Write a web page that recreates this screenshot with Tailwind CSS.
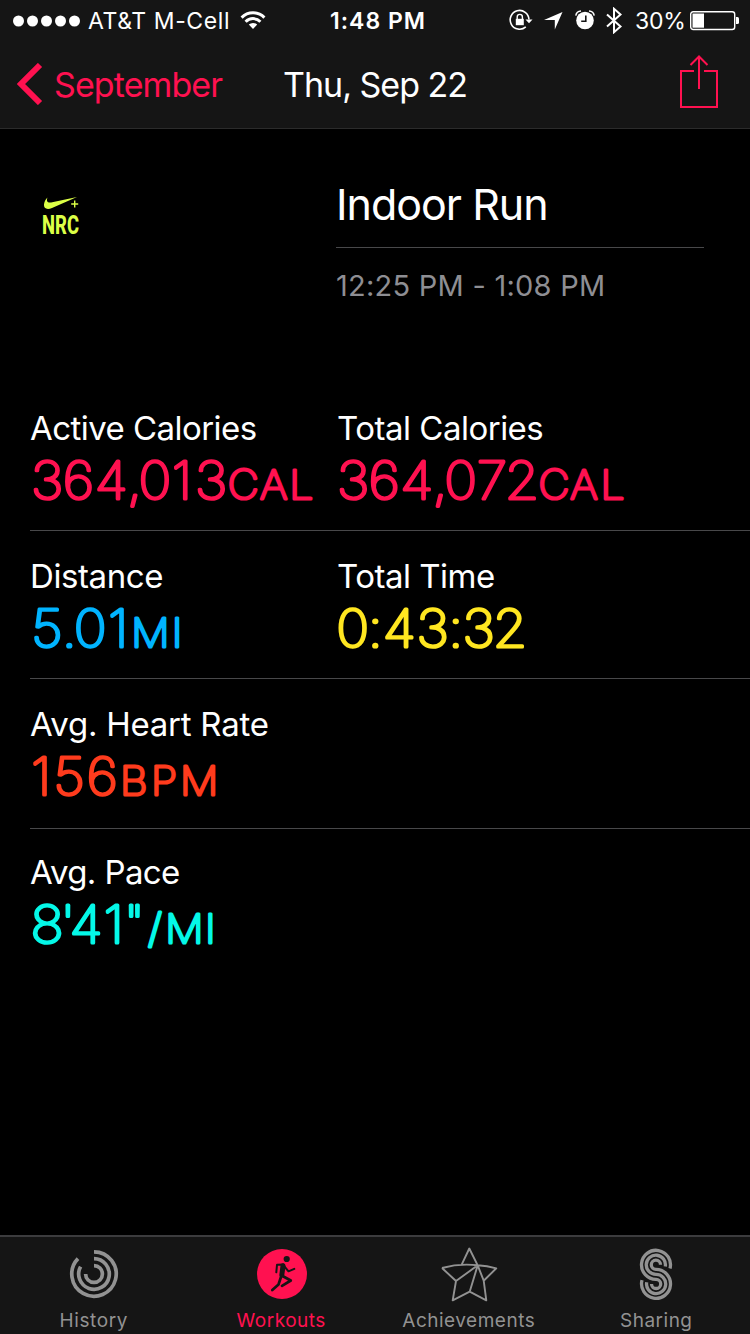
<!DOCTYPE html>
<html lang="en">

<head>
    <meta charset="UTF-8">
    <meta name="viewport" content="width=device-width, initial-scale=1.0">
    <title>Activity - Workout</title>
    <script src="https://cdn.jsdelivr.net/npm/@tailwindcss/browser@4"></script>
</head>

<body class="bg-black text-white font-['Inter',sans-serif] w-[750px] h-[1334px] flex flex-col overflow-hidden">
    <header class="h-[129px] shrink-0 bg-[#151515] border-b border-[#2b2b2b]">
        <!-- Status bar -->
        <div class="h-10 grid grid-cols-[330px_96px_1fr] items-center text-[23px] leading-[42px] whitespace-nowrap">
            <div class="flex items-center pl-[13px]">
                <svg width="68" height="12" viewBox="0 0 68 12" fill="#fff">
                    <circle cx="5.5" cy="6" r="5.5" />
                    <circle cx="19.5" cy="6" r="5.5" />
                    <circle cx="33.5" cy="6" r="5.5" />
                    <circle cx="47.5" cy="6" r="5.5" />
                    <circle cx="61.5" cy="6" r="5.5" />
                </svg>
                <span class="ml-[7px] w-36 tracking-[0.6px]">AT&amp;T M-Cell</span>
                <svg class="ml-2 -mt-0.5" width="26" height="20" viewBox="0 0 26 20" fill="none" stroke="#fff" stroke-width="3">
                    <path d="M1.6 7.6a16 16 0 0 1 22.8 0" />
                    <path d="M5.6 11.7a10.4 10.4 0 0 1 14.8 0" />
                    <path d="M13 19l-4.2-4.4a6 6 0 0 1 8.4 0z" fill="#fff" stroke="none" />
                </svg>
            </div>
            <span class="font-semibold tracking-[1px]">1:48 PM</span>
            <div class="flex items-center pl-[83px]">
                <svg class="-mt-0.5" width="24" height="22" viewBox="0 0 24 22">
                    <path d="M20 10.5a9.4 9.4 0 1 0-3.2 7.4" fill="none" stroke="#fff" stroke-width="1.6" />
                    <path d="M16.5 10.5h7l-3.5 3.8z" fill="#fff" />
                    <path d="M6.8 9.8h8v6.4h-8z" fill="#fff" />
                    <path d="M8.2 10V8a2.6 2.6 0 0 1 5.2 0v2" fill="none" stroke="#fff" stroke-width="1.4" />
                </svg>
                <svg class="ml-[11px]" width="19" height="18" viewBox="0 0 19 18" fill="#fff">
                    <path d="M18.5 0L10.8 17.6V8H0z" />
                </svg>
                <svg class="ml-3 -mt-0.5" width="20" height="20" viewBox="0 0 20 20">
                    <circle cx="10" cy="10.5" r="8.8" fill="#fff" />
                    <path d="M.8 5.6A5.5 5.5 0 0 1 6 1M19.2 5.6A5.5 5.5 0 0 0 14 1" fill="none" stroke="#fff" stroke-width="1.5" />
                    <path d="M10.8 5.5v5.8H6.2" fill="none" stroke="#151515" stroke-width="1.6" />
                </svg>
                <svg class="ml-[11px] -mt-0.5" width="17" height="27" viewBox="0 0 17 27" fill="none" stroke="#fff" stroke-width="2">
                    <path d="M1 7.5l13.5 12L8 25.200V1.800l6.500 5.700L1 19.500" />
                </svg>
                <span class="ml-3 w-[50px] tracking-[-0.2px]">30%</span>
                <svg class="ml-[5px]" width="50" height="20" viewBox="0 0 50 20">
                    <rect x=".7" y=".7" width="44" height="17.8" rx="2.5" fill="none" stroke="#fff" stroke-width="1.4" />
                    <path d="M2.5 2.5H14v14.2H2.5z" fill="#fff" />
                    <path d="M46 6h1.5q1.5 0 1.5 1.5v4q0 1.5-1.5 1.5H46z" fill="#fff" />
                </svg>
            </div>
        </div>

        <!-- Navigation bar -->
        <nav class="h-22 grid grid-cols-[283px_1fr_71px] items-center text-[34px] leading-[89px] whitespace-nowrap">
            <a class="flex items-center pl-[17px] text-[#ff1150]">
                <svg class="-mt-0.5" width="26" height="42" viewBox="0 0 26 42" fill="none" stroke="currentColor" stroke-width="6">
                    <path d="M23 2L4 21l19 19" />
                </svg>
                <span class="ml-[11px] tracking-[-0.9px]">September</span>
            </a>
            <h1 class="tracking-[-1px]">Thu, Sep 22</h1>
            <svg class="-mt-1.5" width="40" height="54" viewBox="0 0 40 54" fill="none" stroke="#ff1150" stroke-width="2">
                <path d="M15 16H2v36h36V16H25M20 34V2M11.5 10L20 1.5 28.5 10" />
            </svg>
        </nav>
    </header>

    <main class="grow">
        <section class="flex h-[245px]">
            <div class="w-[336px] pl-[42px] pt-[66px] text-[#dcff46]">
                <svg class="overflow-visible" width="40" height="44" viewBox="0 0 40 44" fill="currentColor">
                    <path d="M35 2L10 13C5 15 1.5 13.500 2 9.500 2.200 7 3.500 4.500 5.500 2.500 4.200 5.800 5.200 8 9 7.500z" />
                    <path d="M32 5.500h1.400v2.800h2.800v1.400h-2.800v2.800H32V9.700h-2.800V8.300H32z" />
                    <text x="0" y="38.500" textLength="37" lengthAdjust="spacingAndGlyphs" class="text-[26px] font-extrabold font-['Roboto',sans-serif]">NRC</text>
                </svg>
            </div>
            <div class="w-[368px]">
                <h2 class="h-[119px] pt-[48px] text-[43px] leading-[54px] tracking-[-1px] border-b border-[#48484a]">Indoor Run</h2>
                <p class="pt-[18px] text-[29px] leading-10 tracking-[0.25px] text-[#8e8e93]">12:25 PM - 1:08 PM</p>
            </div>
        </section>

        <!-- Stats: the values are thin text with a round-joined outline, for rounded stroke ends -->
        <section class="text-[33px] leading-[38px] whitespace-nowrap">
            <div class="ml-[30px] h-[157px] pt-[35px] grid grid-cols-[307px_1fr] border-b border-[#48484a]">
                <div>
                    <p class="mb-0.5 tracking-[-0.55px]">Active Calories</p>
                    <svg width="300" height="64" class="overflow-visible font-thin text-[52px] text-[#ff1150] fill-current stroke-current stroke-[3.2px] [stroke-linejoin:round]">
                        <text transform="scale(1.07 1)" y="50" x="0.9 30.5 60.4 90.9 101.3 132.6 154.2">364,013<tspan class="text-[40px]" x="184.9 215 242.4">CAL</tspan></text>
                    </svg>
                </div>
                <div>
                    <p class="mb-0.5 tracking-[-0.5px]">Total Calories</p>
                    <svg width="300" height="64" class="overflow-visible font-thin text-[52px] text-[#ff1150] fill-current stroke-current stroke-[3.2px] [stroke-linejoin:round]">
                        <text transform="scale(1.07 1)" y="50" x="-0.1 29.5 59.2 89.6 100.3 130.6 156.8">364,072<tspan class="text-[40px]" x="188.4 218 246.2">CAL</tspan></text>
                    </svg>
                </div>
            </div>
            <div class="ml-[30px] h-[148px] pt-[26px] grid grid-cols-[307px_1fr] border-b border-[#48484a]">
                <div>
                    <p class="mb-0.5 tracking-[-0.4px]">Distance</p>
                    <svg width="300" height="64" class="overflow-visible font-thin text-[52px] text-[#00b4ff] fill-current stroke-current stroke-[3.2px] [stroke-linejoin:round]">
                        <text transform="scale(1.07 1)" y="50" x="1.1 29.7 41 72.8">5.01<tspan class="text-[40px]" x="94.6 132.4">MI</tspan></text>
                    </svg>
                </div>
                <div>
                    <p class="mb-0.5 tracking-[-0.5px]">Total Time</p>
                    <svg width="300" height="64" class="overflow-visible font-thin text-[52px] text-[#ffe620] fill-current stroke-current stroke-[3.2px] [stroke-linejoin:round]">
                        <text transform="scale(1.07 1)" y="50" x="-0.6 28.8 42.7 74.3 103.9 117.3 145.6">0:43:32</text>
                    </svg>
                </div>
            </div>
            <div class="ml-[30px] h-[150px] pt-[26px] border-b border-[#48484a]">
                <p class="mb-0.5 tracking-[-0.25px]">Avg. Heart Rate</p>
                <svg width="300" height="64" class="overflow-visible font-thin text-[52px] text-[#ff3b1d] fill-current stroke-current stroke-[3.2px] [stroke-linejoin:round]">
                    <text transform="scale(1.07 1)" y="50" x="0.9 22 52.8">156<tspan class="text-[40px]" x="84.2 113 140.2">BPM</tspan></text>
                </svg>
            </div>
            <div class="ml-[30px] pt-[24px]">
                <p class="mb-0.5 tracking-[-0.6px]">Avg. Pace</p>
                <svg width="300" height="64" class="overflow-visible font-thin text-[52px] text-[#04f8e8] fill-current stroke-current stroke-[3.2px] [stroke-linejoin:round]">
                    <text transform="scale(1.07 1)" y="50" x="0.5 28.3 36.9 68.7 87.4">8'41"<tspan class="text-[40px]" x="110.2 126.4 163.6">/MI</tspan></text>
                </svg>
            </div>
        </section>
    </main>

    <!-- Tab bar -->
    <footer class="h-[99px] shrink-0 grid grid-cols-4 bg-[#151515] border-t-2 border-[#3c3c3e] text-[19px] leading-6 text-[#929292]">
        <a class="flex flex-col items-center pt-[9px]">
            <span class="h-[63px] pt-[3px]">
                <svg width="50" height="50" viewBox="0 0 50 50" fill="none" stroke="currentColor" stroke-width="3.7">
                    <path d="M25 2.8A22.2 22.2 0 1 1 9 9.6M25 9.7A15.3 15.3 0 1 1 11.6 17.6M25 16.6A8.4 8.4 0 1 1 16.6 25" />
                </svg>
            </span>
            <span class="tracking-[0.6px]">History</span>
        </a>
        <a class="flex flex-col items-center pt-[9px] text-[#ff1150]">
            <span class="h-[63px] pt-[3px] pl-0.5">
                <svg width="50" height="50" viewBox="0 0 50 50" fill="none" stroke="#151515" stroke-linecap="round" stroke-linejoin="round">
                    <circle cx="25" cy="25" r="25" fill="currentColor" stroke="none" />
                    <circle cx="29.7" cy="10" r="3.1" fill="#151515" stroke="none" />
                    <path d="M19.3 23.3L20 15.800 26.500 15.600M27 17L31.500 22.300 37.300 19.800" stroke-width="2" />
                    <path d="M26 16.800L24.800 26" stroke-width="5" />
                    <path d="M25.500 27L33.800 31.500 25 36.800M23.800 28.500L21.500 35.500 15.300 41" stroke-width="2.7" />
                </svg>
            </span>
            <span class="tracking-[0.5px]">Workouts</span>
        </a>
        <a class="flex flex-col items-center pt-[9px]">
            <span class="h-[63px]">
                <svg width="58" height="56" viewBox="0 0 58 56" fill="none" stroke="currentColor" stroke-width="1.9" stroke-linejoin="round">
                    <path d="M21.7 18.7L29.3 2.5 37.7 19.3M2 22Q20 17 37.7 19.3 47 20 56.3 22.3L43.7 34.7M2 22L16 35 37.7 19.3M16 35L12.7 54.3 29.7 45.7 46.3 54.3 43.7 34.7 37.7 19.3 29.7 45.7" />
                </svg>
            </span>
            <span class="tracking-[0.5px]">Achievements</span>
        </a>
        <a class="flex flex-col items-center pt-[9px]">
            <span class="h-[63px]">
                <svg width="34" height="56" viewBox="0 0 34 56" fill="none" stroke="currentColor" stroke-width="3.3">
                    <path d="M31 22.5A14.5 14.5 0 1 0 17 33.3A4.6 4.6 0 1 1 12.5 38" />
                    <path d="M26.3 20.5A9.6 9.6 0 1 0 17 28.4A9.6 9.6 0 1 1 7.7 36.2" />
                    <path d="M21.5 18.7A4.6 4.6 0 1 0 17 23.4A14.5 14.5 0 1 1 3 34.2" />
                </svg>
            </span>
            <span class="tracking-[0.5px]">Sharing</span>
        </a>
    </footer>
</body>

</html>
